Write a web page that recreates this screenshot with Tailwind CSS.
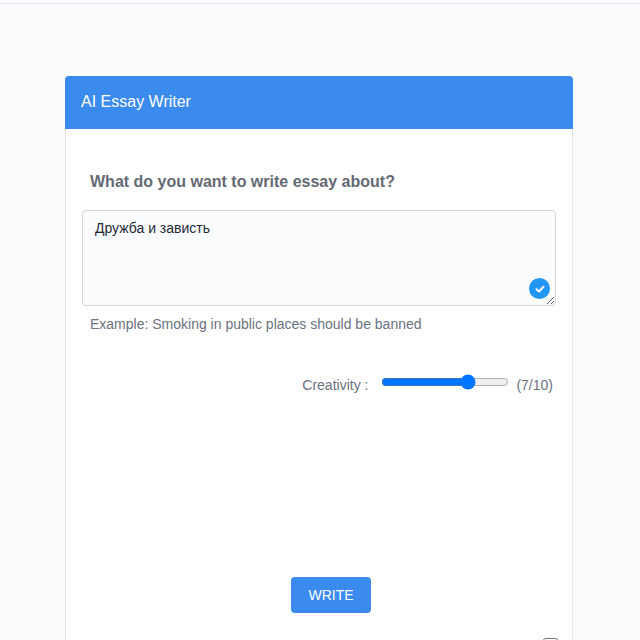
<!DOCTYPE html>
<html lang="en">
<head>
    <meta charset="UTF-8">
    <meta name="viewport" content="width=device-width, initial-scale=1.0">
    <title>AI Essay Writer</title>
    <script src="https://cdn.jsdelivr.net/npm/@tailwindcss/browser@4"></script>
</head>
<body class="bg-[#fafbfd] h-[640px] overflow-hidden font-['Liberation_Sans',sans-serif]">
    <div class="h-[4px] border-b border-[#e5e7eb]"></div>
    <div class="ml-[65px] mt-[72px] w-[508px] h-[564px] bg-white border-x border-[#e5e7eb] rounded-t">
        <div class="-mx-px h-[53px] pb-[2px] bg-[#3b8bee] rounded-t flex items-center px-4 text-white text-base">AI Essay Writer</div>
        <div class="px-4">
            <p class="pt-[43px] pl-2 text-base leading-[20px] font-bold text-[#646973]">What do you want to write essay about?</p>
            <div class="relative mt-[18px]">
                <textarea class="block w-full h-[96px] bg-[#fafbfd] border border-[#d4d6da] rounded px-3 pt-[7px] pb-2 text-sm leading-5 text-[#1f2937]">Дружба и зависть</textarea>
                <div class="absolute right-[6px] bottom-[6px] w-[21px] h-[21px] -translate-y-px rounded-full bg-[#2196f3] flex items-center justify-center">
                    <svg width="10" height="10" viewBox="0 0 10 10" fill="none" stroke="white" stroke-width="2" stroke-linecap="round" stroke-linejoin="round"><path d="M1.5 5.2 4 7.5 8.5 2.8"/></svg>
                </div>
            </div>
            <p class="mt-[10px] pl-2 text-sm leading-[16px] text-[#6b7280]">Example: Smoking in public places should be banned</p>
            <div class="mt-[42px] flex items-center justify-end pr-[3px] text-sm text-[#6b7280]">
                <span>Creativity :</span>
                <input type="range" min="0" max="10" value="7" class="w-32 ml-[13px] mr-[7px] mb-[6px]">
                <span>(7/10)</span>
            </div>
            <div class="mt-[181px] pl-6 flex justify-center">
                <button class="w-20 h-9 bg-[#3b8bee] rounded text-white text-sm">WRITE</button>
            </div>
            <div class="mt-[25px] -mr-[2px] flex justify-end">
                <input type="checkbox" class="w-[15px] h-[15px]">
            </div>
        </div>
    </div>
</body>
</html>
